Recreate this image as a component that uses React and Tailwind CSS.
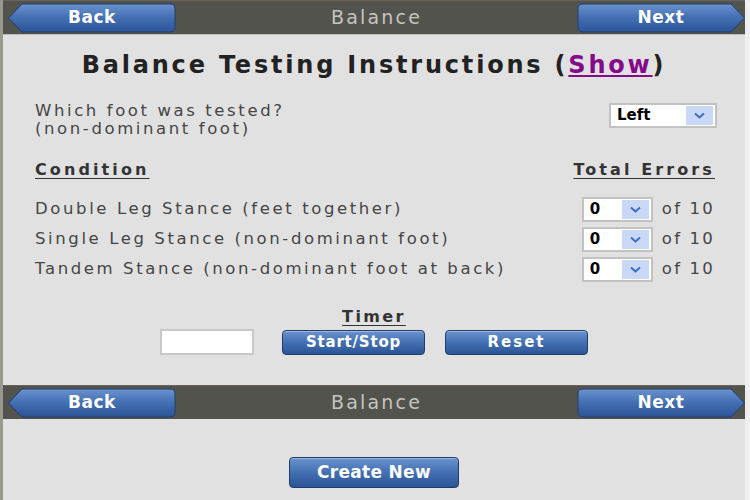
import React from "react";

const F = { fontFamily: '"DejaVu Sans", Verdana, sans-serif' };

function NavButton({ dir, label }) {
  const left = dir === "left";
  return (
    <div className="relative w-[168px] h-[30px] flex items-center justify-center">
      <svg className="absolute inset-0 w-full h-full" viewBox="0 0 168 30" preserveAspectRatio="none">
        <defs>
          <linearGradient id={"ng" + dir} x1="0" y1="0" x2="0" y2="1">
            <stop offset="0" stopColor="#6b93cf" />
            <stop offset="0.45" stopColor="#4571b5" />
            <stop offset="1" stopColor="#2c5497" />
          </linearGradient>
        </defs>
        {left ? (
          <path d="M0.5 15 L14 1 L162 1 Q167 1 167 6 L167 24 Q167 29 162 29 L14 29 Z" fill={"url(#ng" + dir + ")"} stroke="#233f70" strokeWidth="1" />
        ) : (
          <path d="M167.5 15 L154 1 L6 1 Q1 1 1 6 L1 24 Q1 29 6 29 L154 29 Z" fill={"url(#ng" + dir + ")"} stroke="#233f70" strokeWidth="1" />
        )}
      </svg>
      <span className="relative text-white font-bold text-[17px] tracking-[0.5px]" style={F}>{label}</span>
    </div>
  );
}

function Bar() {
  return (
    <div className="h-[34px] bg-[#53534d] flex items-center justify-between pl-[5px] pr-0 border-t border-[#6a6258]">
      <NavButton dir="left" label="Back" />
      <span className="text-[#c4c4c0] text-[19px] tracking-[2.2px]" style={F}>Balance</span>
      <NavButton dir="right" label="Next" />
    </div>
  );
}

function BlueButton({ label, w, h, size }) {
  return (
    <div
      className={`${w} ${h} rounded-[4px] border border-[#223c6b] bg-gradient-to-b from-[#6a92cd] via-[#4370b3] to-[#2c5496] flex items-center justify-center shadow-[inset_0_1px_0_rgba(255,255,255,0.35)]`}
    >
      <span className={`text-white font-bold ${size}`} style={F}>{label}</span>
    </div>
  );
}

function Select({ value, w }) {
  return (
    <div className={`${w} h-[25px] bg-white border-2 border-[#c2c2c2] flex items-center justify-between pl-[6px] pr-[2px]`}>
      <span className="text-black font-bold text-[15px]" style={F}>{value}</span>
      <div className="w-[27px] h-[19px] bg-[#c9d8f7] flex items-center justify-center">
        <svg width="11" height="7" viewBox="0 0 11 7">
          <path d="M1 1.5 L5.5 5.5 L10 1.5" fill="none" stroke="#3c6ac8" strokeWidth="1.8" />
        </svg>
      </div>
    </div>
  );
}

export default function App() {
  const rows = [
    "Double Leg Stance (feet together)",
    "Single Leg Stance (non-dominant foot)",
    "Tandem Stance (non-dominant foot at back)",
  ];
  return (
    <div className="w-[750px] h-[500px] flex bg-[#e1e1e1] overflow-hidden" style={F}>
      <div className="w-[3px] bg-[#9d988f]" />
      <div className="w-[742px] flex flex-col">
        <Bar />
        <div className="h-[351px] flex flex-col border-t border-[#bdbdbd]">
          <h1 className="mt-[16px] text-center text-[24px] font-bold text-[#222] tracking-[2.8px] leading-[28px]">
            Balance Testing Instructions (<span className="text-[#850a8a] underline decoration-2 underline-offset-2">Show</span>)
          </h1>
          <div className="mt-[23px] flex justify-between items-start pl-[32px] pr-[28px]">
            <div className="text-[16.5px] text-[#454545] leading-[18px] tracking-[2.6px]">
              <div>Which foot was tested?</div>
              <div>(non-dominant foot)</div>
            </div>
            <div className="mt-[1px]">
              <Select value="Left" w="w-[108px]" />
            </div>
          </div>
          <div className="mt-[22px] flex justify-between pl-[32px] pr-[30px] text-[16px] font-bold text-[#333] tracking-[3.1px] underline underline-offset-[3px] leading-[20px]">
            <span>Condition</span>
            <span>Total Errors</span>
          </div>
          <div className="mt-[17px] flex flex-col gap-[5px] pl-[32px] pr-[30px]">
            {rows.map((r) => (
              <div key={r} className="flex items-center justify-between h-[25px]">
                <span className="text-[16.5px] text-[#454545] tracking-[2.6px]">{r}</span>
                <div className="flex items-center gap-[9px]">
                  <Select value="0" w="w-[71px]" />
                  <span className="text-[16.5px] text-[#454545] tracking-[2.2px]">of 10</span>
                </div>
              </div>
            ))}
          </div>
          <div className="mt-[26px] text-center text-[16px] font-bold text-[#333] tracking-[2.4px] underline underline-offset-[3px] leading-[18px]">
            Timer
          </div>
          <div className="mt-[3px] flex items-center justify-center gap-[28px]">
            <div className="w-[94px] h-[26px] bg-white border-2 border-[#c8c8c8]" />
            <div className="flex gap-[20px]">
              <BlueButton label="Start/Stop" w="w-[143px]" h="h-[25px]" size="text-[15px] tracking-[0.8px]" />
              <BlueButton label="Reset" w="w-[143px]" h="h-[25px]" size="text-[15px] tracking-[2px]" />
            </div>
          </div>
        </div>
        <Bar />
        <div className="flex-1 flex justify-center pt-[38px]">
          <BlueButton label="Create New" w="w-[170px]" h="h-[31px]" size="text-[17px] tracking-[0.3px]" />
        </div>
      </div>
      <div className="w-[5px] bg-[#efefef]" />
    </div>
  );
}
